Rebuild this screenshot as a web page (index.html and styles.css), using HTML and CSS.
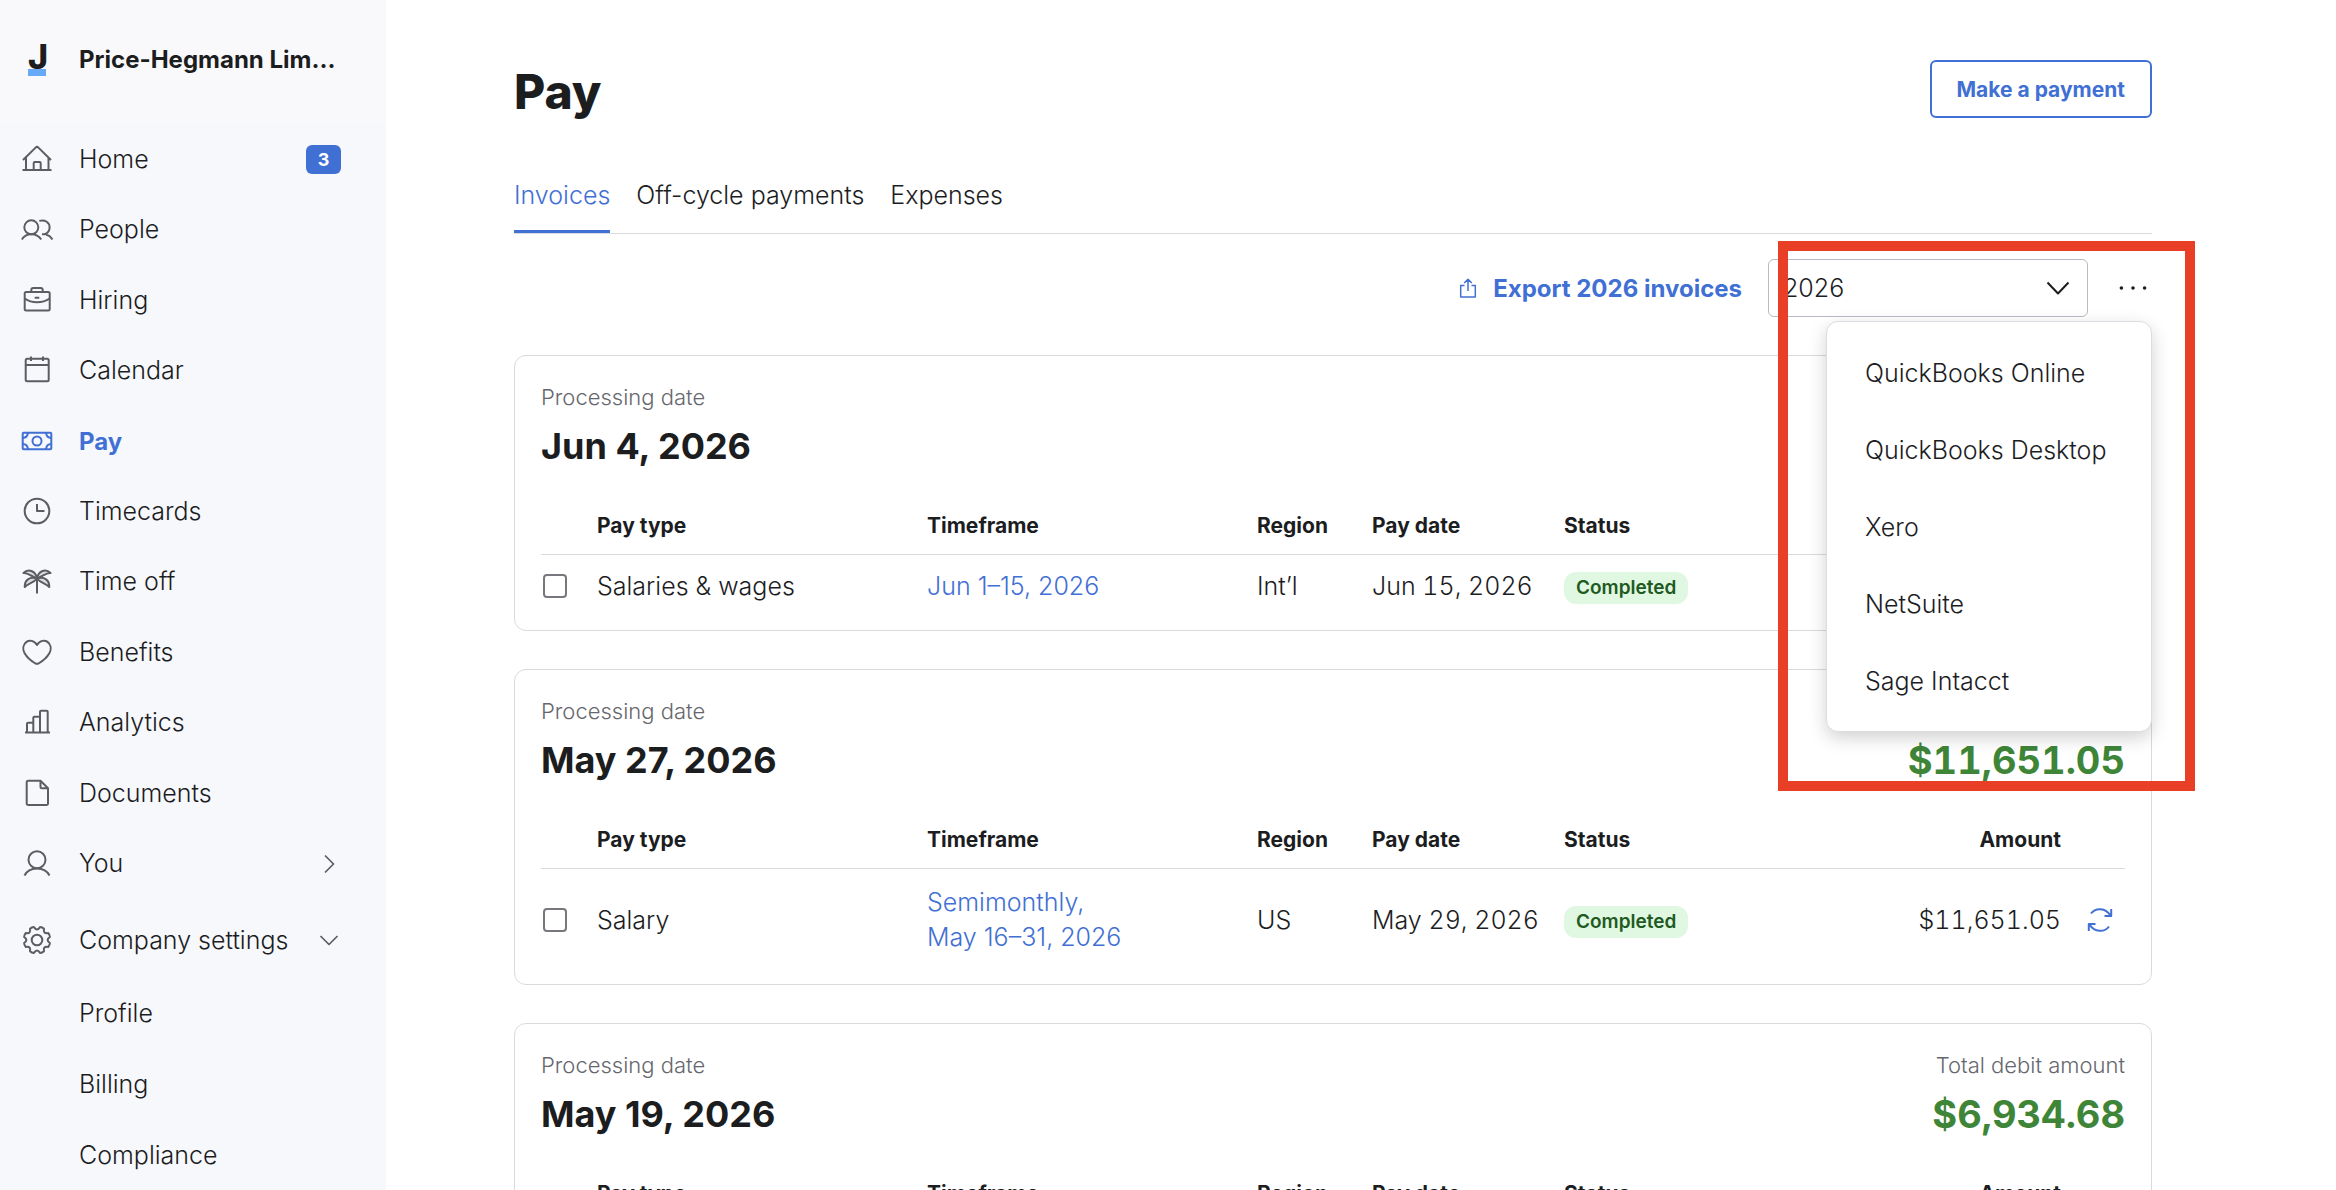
FILE: index.html
```html
<!DOCTYPE html>
<html lang="en">
  <head>
    <meta charset="UTF-8" />
    <meta name="viewport" content="width=device-width, initial-scale=1.0" />
    <title>Pay</title>
    <link rel="stylesheet" href="styles.css">
  </head>
  <body>
    <aside class="sidebar">
      <div class="brand">
        <span class="logo">J</span>
        <span class="company">Price-Hegmann Lim...</span>
      </div>

      <nav>
        <ul class="nav-list">
          <li>
            <a href="#">
              <svg class="icon" viewBox="0 0 32 32"><path d="M1.5 27h29M5 14.5V27M27.5 14.5V27M2 17 14.6 4.6a2 2 0 0 1 2.8 0L30 17M12.7 27v-7a1 1 0 0 1 1-1h5a1 1 0 0 1 1 1v7" /></svg>
              Home
              <span class="count">3</span>
            </a>
          </li>
          <li>
            <a href="#">
              <svg class="icon" viewBox="0 0 32 32"><circle cx="10.3" cy="13.3" r="7" /><path d="M.8 25.5c4-7 15-7 19.4 0M18.3 6.9c6-1.8 10.3 1.8 10.3 6.5 0 3.2-1.8 5.6-5 6.9H21M25 20.5c2.7.7 5 2.5 6.5 5" /></svg>
              People
            </a>
          </li>
          <li>
            <a href="#">
              <svg class="icon" viewBox="0 0 32 32"><rect x="3.7" y="8" width="25" height="18.5" rx="1.5" /><path d="M10.3 8V6a2 2 0 0 1 2-2h7.4a2 2 0 0 1 2 2v2M3.7 14.5c7 5 17.6 5 25 0M13.7 13.7h4.6" /></svg>
              Hiring
            </a>
          </li>
          <li>
            <a href="#">
              <svg class="icon" viewBox="0 0 32 32"><rect x="4.7" y="3.7" width="23" height="22.6" rx="1.5" /><path d="M4.7 10h23M10 1.5V6M22 1.5V6" /></svg>
              Calendar
            </a>
          </li>
          <li>
            <a href="#" class="current">
              <svg class="icon" viewBox="0 0 32 32"><rect x="1.7" y="7.7" width="28.6" height="16.6" rx="1" /><circle cx="16" cy="16" r="4.5" /><path d="M1.7 13q4.8 0 5.3-5.3M30.3 13q-4.8 0-5.3-5.3M1.7 19q4.8 0 5.3 5.3M30.3 19q-4.8 0-5.3 5.3" /></svg>
              Pay
            </a>
          </li>
          <li>
            <a href="#">
              <svg class="icon" viewBox="0 0 32 32"><circle cx="16" cy="16" r="12.3" /><path d="M16 9v7h7.5" /></svg>
              Timecards
            </a>
          </li>
          <li>
            <a href="#">
              <svg class="icon palm" viewBox="0 0 32 32"><path d="M16 12.5C15 6 8 1.5 2.5 7c4.5-.5 7.5 3.5 13.5 5.5ZM16 12.5C17 6 24 1.5 29.5 7c-4.5-.5-7.5 3.5-13.5 5.5ZM16 12.5C8.5 10 3.5 14.5 3.7 21c3.5-4 8.5-3.5 12.3-8.5ZM16 12.5c7.5-2.5 12.5 2 12.3 8.5-3.5-4-8.5-3.5-12.3-8.5ZM16 12v15.5" /></svg>
              Time off
            </a>
          </li>
          <li>
            <a href="#">
              <svg class="icon" viewBox="0 0 32 32"><path d="M16 9C13 4 8 4 5.5 5.9 2 8.5 1.4 13 3.5 17 6 21.5 11 25.5 14.5 27.5q1.5.7 3 0C21 25.5 26 21.5 28.5 17c2.1-4 1.5-8.5-2-11.1C24 4 19 4 16 9Z" /></svg>
              Benefits
            </a>
          </li>
          <li>
            <a href="#">
              <svg class="icon" viewBox="0 0 32 32"><path d="M4 25.5h25M6 25.5v-8.8a1 1 0 0 1 1-1h5M12.3 25.5V10.7a1 1 0 0 1 1-1H19M19 25.5V4.7a1 1 0 0 1 1-1h5.7a1 1 0 0 1 1 1v20.8" /></svg>
              Analytics
            </a>
          </li>
          <li>
            <a href="#">
              <svg class="icon" viewBox="0 0 32 32"><path d="M19.5 3.7H7.2a1.5 1.5 0 0 0-1.5 1.5v21.3A1.5 1.5 0 0 0 7.2 28h18.3a1.5 1.5 0 0 0 1.5-1.5V11.2ZM19.5 3.7v6a1.5 1.5 0 0 0 1.5 1.5h6" /></svg>
              Documents
            </a>
          </li>
          <li>
            <a href="#">
              <svg class="icon" viewBox="0 0 32 32"><circle cx="16" cy="11.7" r="8.5" /><path d="M3.5 27.5c4.5-9.5 20.5-9.5 25 0" /></svg>
              You
              <svg class="chevron" viewBox="0 0 24 24"><path d="m8 3.5 8.5 8.5L8 20.5" /></svg>
            </a>
          </li>
        </ul>

        <a href="#" class="settings">
          <svg class="icon" viewBox="-16 -16 32 32"><circle r="5.3" /><path d="M-3-12.9Q0-8.3 3-12.9 5.3-12.8 7-11.2 5.9-5.9 11.2-7 12.8-5.3 12.9-3 8.3 0 12.9 3 12.8 5.3 11.2 7 5.9 5.9 7 11.2 5.3 12.8 3 12.9 0 8.3-3 12.9-5.3 12.8-7 11.2-5.9 5.9-11.2 7-12.8 5.3-12.9 3-8.3 0-12.9-3-12.8-5.3-11.2-7-5.9-5.9-7-11.2-5.3-12.8-3-12.9Z" /></svg>
          Company settings
          <svg class="chevron" viewBox="0 0 24 24"><path d="m3.5 8 8.5 8.5L20.5 8" /></svg>
        </a>
        <ul class="sub-list">
          <li><a href="#">Profile</a></li>
          <li><a href="#">Billing</a></li>
          <li><a href="#">Compliance</a></li>
        </ul>
      </nav>
    </aside>

    <main>
      <header class="page-header">
        <h1>Pay</h1>
        <button class="btn-outline">Make a payment</button>
      </header>

      <nav class="tabs">
        <a href="#" class="active">Invoices</a>
        <a href="#">Off-cycle payments</a>
        <a href="#">Expenses</a>
      </nav>

      <div class="toolbar">
        <a href="#" class="export">
          <svg viewBox="0 0 18 20"><path d="M5.5 7.5H1.7V19h14.6V7.5h-3.8M9 13V1.2M5.2 5 9 1.2 12.8 5" /></svg>
          Export 2026 invoices
        </a>
        <div class="year">
          <select aria-label="Year">
            <option>2026</option>
          </select>
          <svg viewBox="0 0 24 24"><path d="m1.5 6.5 10.5 11 10.5-11" /></svg>
        </div>
        <button class="more" aria-label="More options">
          <svg viewBox="0 0 36 36"><circle cx="7" cy="18" r="1.7" /><circle cx="18" cy="18" r="1.7" /><circle cx="29" cy="18" r="1.7" /></svg>
        </button>

        <!-- export menu -->
        <ul class="menu">
          <li><a href="#">QuickBooks Online</a></li>
          <li><a href="#">QuickBooks Desktop</a></li>
          <li><a href="#">Xero</a></li>
          <li><a href="#">NetSuite</a></li>
          <li><a href="#">Sage Intacct</a></li>
        </ul>
        <div class="highlight"></div>
      </div>

      <section class="card">
        <div class="card-head">
          <div>
            <p class="label">Processing date</p>
            <h2>Jun 4, 2026</h2>
          </div>
        </div>
        <table>
          <thead>
            <tr>
              <th class="col-check"></th>
              <th class="col-type">Pay type</th>
              <th class="col-time">Timeframe</th>
              <th class="col-region">Region</th>
              <th class="col-date">Pay date</th>
              <th>Status</th>
              <th class="col-amount"></th>
              <th class="col-action"></th>
            </tr>
          </thead>
          <tbody>
            <tr>
              <td><input type="checkbox" aria-label="Select Salaries &amp; wages" /></td>
              <td>Salaries &amp; wages</td>
              <td><a href="#">Jun 1–15, 2026</a></td>
              <td>Int’l</td>
              <td class="num">Jun 15, 2026</td>
              <td><span class="status">Completed</span></td>
              <td></td>
              <td></td>
            </tr>
          </tbody>
        </table>
      </section>

      <section class="card">
        <div class="card-head">
          <div>
            <p class="label">Processing date</p>
            <h2>May 27, 2026</h2>
          </div>
          <p class="total">$11,651.05</p>
        </div>
        <table>
          <thead>
            <tr>
              <th class="col-check"></th>
              <th class="col-type">Pay type</th>
              <th class="col-time">Timeframe</th>
              <th class="col-region">Region</th>
              <th class="col-date">Pay date</th>
              <th>Status</th>
              <th class="col-amount">Amount</th>
              <th class="col-action"></th>
            </tr>
          </thead>
          <tbody>
            <tr>
              <td><input type="checkbox" aria-label="Select Salary" /></td>
              <td>Salary</td>
              <td><a href="#" class="two-line">Semimonthly,<br />May 16–31, 2026</a></td>
              <td>US</td>
              <td class="num">May 29, 2026</td>
              <td><span class="status">Completed</span></td>
              <td class="num col-amount">$11,651.05</td>
              <td class="col-action">
                <button class="refresh" aria-label="Recurring">
                  <svg viewBox="0 0 28 28"><path d="M5 7.5C9.5 1.3 19.5 1.5 24.5 9.5M25.2 3v6.9h-6.7M23 20.5C18.5 26.7 8.5 26.5 3.5 18.5M2.8 25v-6.9h6.7" /></svg>
                </button>
              </td>
            </tr>
          </tbody>
        </table>
      </section>

      <section class="card">
        <div class="card-head">
          <div>
            <p class="label">Processing date</p>
            <h2>May 19, 2026</h2>
          </div>
          <div>
            <p class="label">Total debit amount</p>
            <p class="total">$6,934.68</p>
          </div>
        </div>
        <table>
          <thead>
            <tr>
              <th class="col-check"></th>
              <th class="col-type">Pay type</th>
              <th class="col-time">Timeframe</th>
              <th class="col-region">Region</th>
              <th class="col-date">Pay date</th>
              <th>Status</th>
              <th class="col-amount">Amount</th>
              <th class="col-action"></th>
            </tr>
          </thead>
        </table>
      </section>
    </main>
  </body>
</html>
```
FILE: styles.css
```css
* {
  box-sizing: border-box;
}

body {
  display: flex;
  height: 100vh;
  margin: 0;
  font-family: Inter, "Liberation Sans", sans-serif;
  font-size: 25px;
  font-weight: 300;
  line-height: 35px;
  color: #1c1d1f;
  background: #fff;
}

h1,
h2,
p,
ul {
  margin: 0;
  padding: 0;
}

ul {
  list-style: none;
}

a {
  color: inherit;
  text-decoration: none;
}

button,
select {
  font-family: inherit;
  color: inherit;
  background: none;
  border: none;
  padding: 0;
  cursor: pointer;
}

svg {
  display: block;
  fill: none;
  stroke: currentColor;
  stroke-width: 2;
  stroke-linejoin: round;
}

/* Sidebar */
.sidebar {
  flex: 0 0 386px;
  overflow: hidden;
  background: #f7f8fc;
}

.brand {
  display: flex;
  align-items: center;
  gap: 33px;
  height: 122px;
  padding: 0 28px 3px;
  background: #f9f9fb;
}

.logo {
  width: 18px;
  border-bottom: 7px solid #68aaf8;
  font-size: 34px;
  font-weight: 800;
  line-height: 25px;
  text-align: center;
}

.company {
  font-size: 24px;
  font-weight: 700;
  white-space: nowrap;
}

.nav-list {
  display: grid;
  grid-auto-rows: 1fr;
  min-height: 775px;
  margin-top: 2px;
}

.nav-list a,
.settings {
  display: flex;
  align-items: center;
  height: 100%;
  padding: 0 45px 0 21px;
}

.icon {
  width: 32px;
  height: 32px;
  margin-right: 26px;
  color: #5c5d63;
}

.palm {
  fill: #dcdde0;
}

.nav-list .current {
  color: #4170d4;
  font-size: 24px;
  font-weight: 700;
}

.current .icon {
  color: #4170d4;
}

.count {
  width: 35px;
  margin-left: auto;
  border-radius: 6px;
  background: #4170d4;
  color: #fff;
  font-size: 18px;
  font-weight: 700;
  line-height: 29px;
  text-align: center;
}

.chevron {
  width: 24px;
  height: 24px;
  margin-left: auto;
  color: #5c5d63;
  stroke-width: 1.7;
}

.settings {
  height: 76px;
  margin-top: 3px;
}

.sub-list a {
  display: block;
  padding: 0 45px 0 79px;
  line-height: 71px;
}

/* Page */
main {
  flex: 1;
  min-width: 0;
  overflow-y: auto;
  padding: 60px 184px 0 128px;
  scrollbar-width: none;
}

.page-header {
  display: flex;
  justify-content: space-between;
  align-items: flex-start;
  margin-bottom: 54px;
}

h1 {
  font-size: 48px;
  font-weight: 800;
  line-height: 64px;
}

.btn-outline {
  height: 58px;
  padding: 0 25px;
  border: 2px solid #4170d4;
  border-radius: 6px;
  color: #4170d4;
  font-size: 21px;
  font-weight: 700;
}

.tabs {
  display: flex;
  gap: 26px;
  border-bottom: 1px solid #dadade;
}

.tabs a {
  padding-bottom: 17px;
  border-bottom: 3px solid transparent;
}

.tabs .active {
  color: #4170d4;
  border-color: #4170d4;
}

/* Toolbar */
.toolbar {
  position: relative;
  display: flex;
  justify-content: flex-end;
  align-items: center;
  gap: 26px;
  margin: 25px 0 38px;
}

.export {
  display: flex;
  align-items: center;
  gap: 16px;
  color: #4170d4;
  font-size: 24px;
  font-weight: 700;
}

.export svg {
  width: 18px;
  height: 20px;
  stroke-width: 1.5;
}

.year {
  position: relative;
}

.year select {
  width: 320px;
  height: 58px;
  padding: 0 14px;
  border: 1px solid #b9bac4;
  border-radius: 6px;
  appearance: none;
  font-size: 25px;
  font-weight: 300;
}

.year svg {
  position: absolute;
  top: 17px;
  right: 18px;
  width: 24px;
  height: 24px;
  pointer-events: none;
}

.more svg {
  width: 38px;
  height: 38px;
  fill: currentColor;
  stroke: none;
}

.menu {
  position: absolute;
  z-index: 2;
  top: 62px;
  right: 0;
  width: 326px;
  padding: 13px 0 11px;
  border: 1px solid #dcdce3;
  border-radius: 12px;
  background: #fff;
  box-shadow: 0 6px 18px rgba(0, 0, 0, 0.18);
}

.menu a {
  display: block;
  padding: 0 38px;
  line-height: 77px;
  white-space: nowrap;
}

.highlight {
  position: absolute;
  z-index: 3;
  top: -18px;
  right: -43px;
  width: 417px;
  height: 550px;
  border: 10px solid #e93f26;
  pointer-events: none;
}

/* Invoice cards */
.card {
  margin-bottom: 38px;
  padding: 26px 26px 13px;
  border: 1px solid #dadade;
  border-radius: 12px;
}

.card-head {
  display: flex;
  justify-content: space-between;
  align-items: flex-end;
  margin-bottom: 41px;
}

.label {
  margin-bottom: 10px;
  color: #66676e;
  font-size: 22px;
  line-height: 30px;
  text-align: right;
}

h2,
.total {
  font-size: 36px;
  font-weight: 700;
  line-height: 48px;
}

.card-head div:first-child .label {
  text-align: left;
}

.total {
  color: #3e8538;
  font-size: 38px;
  font-variant-numeric: tabular-nums;
}

table {
  width: 100%;
  table-layout: fixed;
  border-collapse: collapse;
}

th {
  padding: 0 0 13px;
  border-bottom: 1px solid #dadade;
  font-size: 21px;
  font-weight: 700;
  line-height: 30px;
  text-align: left;
}

td {
  padding: 13px 0;
  white-space: nowrap;
}

td a {
  color: #4170d4;
}

.two-line {
  display: block;
  padding: 3px 0;
}

.col-check {
  width: 56px;
}

.col-type,
.col-time {
  width: 330px;
}

.col-region {
  width: 115px;
}

.col-date {
  width: 192px;
}

.col-amount {
  width: 180px;
  text-align: right;
}

.col-action {
  width: 64px;
}

.num {
  font-variant-numeric: tabular-nums;
}

td input {
  display: block;
  width: 24px;
  height: 24px;
  margin: 0 2px;
  border: 2px solid #77787d;
  border-radius: 4px;
  appearance: none;
}

.status {
  display: inline-block;
  padding: 0 12px;
  border-radius: 12px;
  background: #e0f7e2;
  color: #1f5a23;
  font-size: 19px;
  font-weight: 600;
  line-height: 32px;
}

.refresh {
  display: block;
  margin-left: 25px;
  color: #4170d4;
}

.refresh svg {
  width: 28px;
  height: 28px;
}
```
